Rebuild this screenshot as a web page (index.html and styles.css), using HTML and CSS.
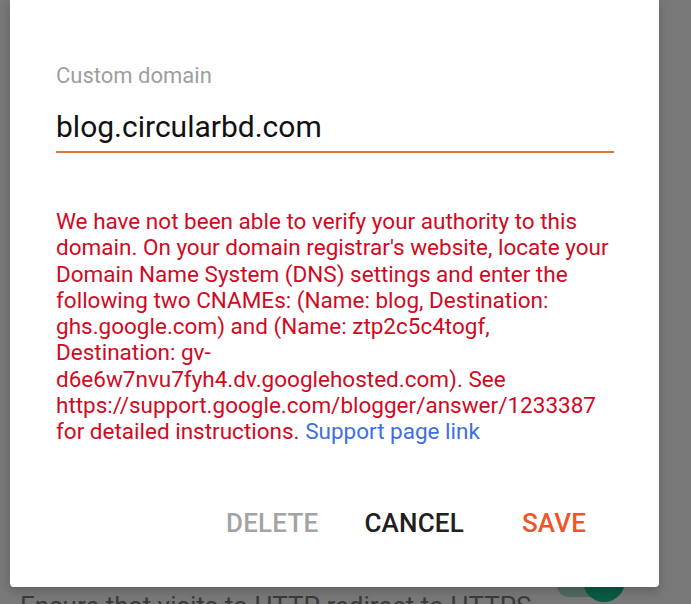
FILE: index.html
```html
<!DOCTYPE html>
<html lang="en">
<head>
<meta charset="utf-8">
<title>Custom domain</title>
<link rel="stylesheet" href="styles.css">
</head>
<body>
<div class="dialog">
  <div class="field">
    <div class="label">Custom domain</div>
    <div class="input">blog.circularbd.com</div>
  </div>
  <p class="error">We have not been able to verify your authority to this domain. On your domain registrar's website, locate your Domain Name System (DNS) settings and enter the following two CNAMEs: (Name: blog, Destination: ghs.google.com) and (Name: ztp2c5c4togf, Destination: gv-d6e6w7nvu7fyh4.dv.googlehosted.com). See https://support.google.com/blogger/answer/1233387 for detailed instructions. <a class="link" href="#">Support page link</a></p>
  <div class="actions">
    <span class="btn btn-disabled">DELETE</span>
    <span class="btn btn-cancel">CANCEL</span>
    <span class="btn btn-save">SAVE</span>
  </div>
</div>
<div class="under">
  <span class="under-text">Ensure that visits to HTTP redirect to HTTPS</span>
  <span class="switch"><span class="thumb"></span></span>
</div>
</body>
</html>
```
FILE: styles.css
```css
html, body {
  margin: 0;
  padding: 0;
}
body {
  background: #787878;
  height: 604px;
  overflow: hidden;
  font-family: Roboto, "Liberation Sans", sans-serif;
}
.dialog {
  position: relative;
  z-index: 2;
  box-sizing: border-box;
  margin-left: 10px;
  width: 649px;
  height: 587px;
  background: #ffffff;
  border-radius: 0 0 4px 4px;
  box-shadow: 0 4px 10px rgba(0,0,0,0.2);
  padding: 63px 45px 0 46px;
}
.label {
  font-size: 22px;
  line-height: 26px;
  color: #9e9e9e;
}
.input {
  margin-top: 20px;
  font-size: 30px;
  line-height: 36px;
  color: #111111;
  padding-bottom: 6px;
  border-bottom: 2px solid #e2762f;
}
.error {
  margin: 55px 0 0;
  font-size: 22.5px;
  line-height: 26.25px;
  color: #d10a1f;
}
.link {
  color: #3d6ee6;
  text-decoration: none;
}
.actions {
  margin-top: 64px;
  display: flex;
  justify-content: flex-end;
  gap: 46px;
  padding-right: 16px;
}
.btn {
  min-width: 88px;
  text-align: center;
  font-size: 26px;
  line-height: 30px;
  font-weight: 500;
  letter-spacing: 0.2px;
}
.btn-disabled { color: #a3a3a3; }
.btn-cancel { color: #202020; }
.btn-save { color: #f2542a; }
.under {
  display: flex;
  align-items: flex-start;
  padding-left: 20px;
}
.under-text {
  margin-top: 4px;
  font-size: 26px;
  line-height: 30px;
  color: #3a3a3a;
}
.switch {
  position: relative;
  margin-left: 26px;
  margin-top: -14px;
  width: 50px;
  height: 24px;
  border-radius: 12px;
  background: #4f6b5f;
}
.thumb {
  position: absolute;
  right: -18px;
  top: -13px;
  width: 42px;
  height: 42px;
  border-radius: 50%;
  background: #0a5a44;
}
```
